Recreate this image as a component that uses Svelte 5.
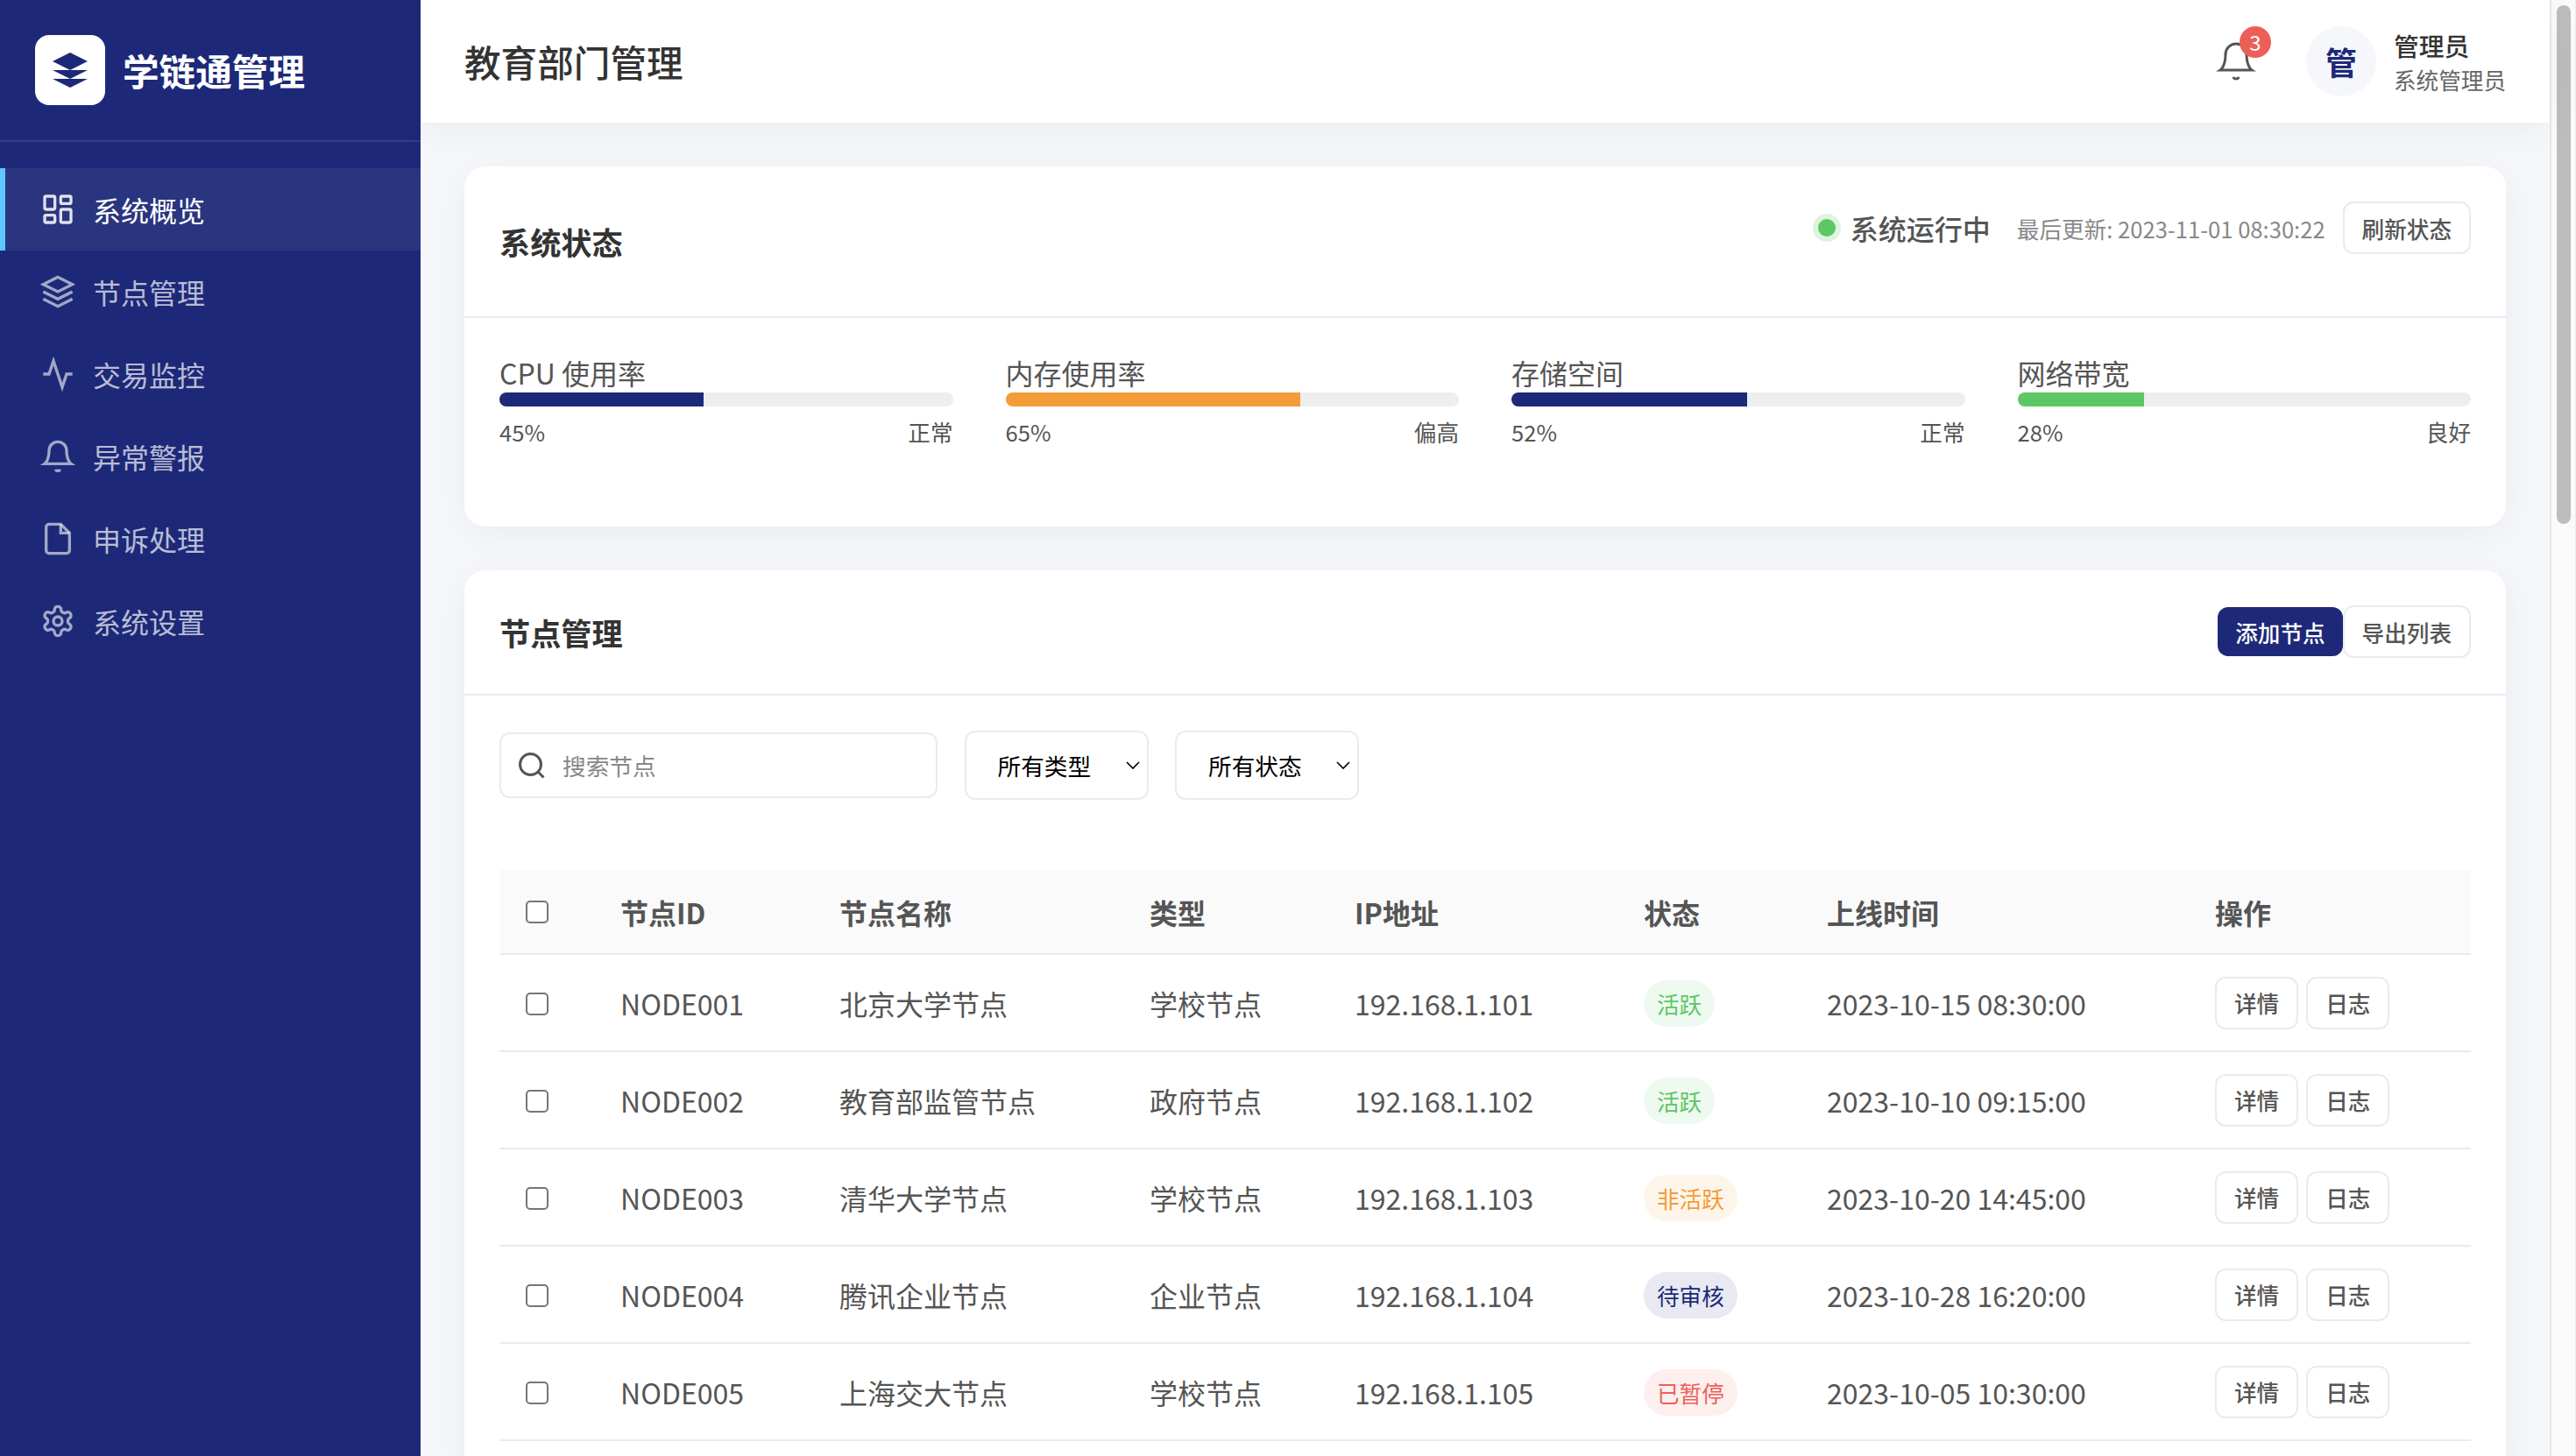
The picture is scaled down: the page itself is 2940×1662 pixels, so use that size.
<script>
	const navItems = [
		{ label: '系统概览', icon: 'grid', active: true },
		{ label: '节点管理', icon: 'layers' },
		{ label: '交易监控', icon: 'activity' },
		{ label: '异常警报', icon: 'bell' },
		{ label: '申诉处理', icon: 'file' },
		{ label: '系统设置', icon: 'gear' }
	];

	const metrics = [
		{ label: 'CPU 使用率', value: 45, state: '正常', tone: 'navy' },
		{ label: '内存使用率', value: 65, state: '偏高', tone: 'orange' },
		{ label: '存储空间', value: 52, state: '正常', tone: 'navy' },
		{ label: '网络带宽', value: 28, state: '良好', tone: 'green' }
	];

	const nodes = [
		{ id: 'NODE001', name: '北京大学节点', type: '学校节点', ip: '192.168.1.101', status: '活跃', tone: 'green', time: '2023-10-15 08:30:00' },
		{ id: 'NODE002', name: '教育部监管节点', type: '政府节点', ip: '192.168.1.102', status: '活跃', tone: 'green', time: '2023-10-10 09:15:00' },
		{ id: 'NODE003', name: '清华大学节点', type: '学校节点', ip: '192.168.1.103', status: '非活跃', tone: 'orange', time: '2023-10-20 14:45:00' },
		{ id: 'NODE004', name: '腾讯企业节点', type: '企业节点', ip: '192.168.1.104', status: '待审核', tone: 'navy', time: '2023-10-28 16:20:00' },
		{ id: 'NODE005', name: '上海交大节点', type: '学校节点', ip: '192.168.1.105', status: '已暂停', tone: 'red', time: '2023-10-05 10:30:00' }
	];
</script>

<div class="layout">
	<aside class="sidebar">
		<div class="brand">
			<div class="logo">
				<svg viewBox="0 0 24 24" width="48" height="48" fill="#1d2978">
					<path d="M12 2 2 7l10 5 10-5z" />
					<path d="M2 12l10 5 10-5z" />
					<path d="M2 17l10 5 10-5z" />
				</svg>
			</div>
			<span class="brand-name">学链通管理</span>
		</div>
		<nav class="nav">
			{#each navItems as item}
				<div class="nav-item" class:active={item.active}>
					<svg class="nav-icon" viewBox="0 0 24 24" fill="none" stroke="currentColor" stroke-width="2">
						{#if item.icon === 'grid'}
							<rect x="3" y="3" width="7" height="9" rx="1" />
							<rect x="14" y="3" width="7" height="5" rx="1" />
							<rect x="14" y="12" width="7" height="9" rx="1" />
							<rect x="3" y="16" width="7" height="5" rx="1" />
						{:else if item.icon === 'layers'}
							<path d="M12 2 2 7l10 5 10-5z" />
							<path d="M2 17l10 5 10-5" />
							<path d="M2 12l10 5 10-5" />
						{:else if item.icon === 'activity'}
							<path d="M22 12h-4l-3 9L9 3l-3 9H2" />
						{:else if item.icon === 'bell'}
							<path d="M18 8A6 6 0 0 0 6 8c0 7-3 9-3 9h18s-3-2-3-9" />
							<path d="M13.73 21a2 2 0 0 1-3.46 0" />
						{:else if item.icon === 'file'}
							<path d="M14 2H6a2 2 0 0 0-2 2v16a2 2 0 0 0 2 2h12a2 2 0 0 0 2-2V8z" />
							<path d="M14 2v6h6" />
						{:else}
							<path d="M12.22 2h-.44a2 2 0 0 0-2 2v.18a2 2 0 0 1-1 1.73l-.43.25a2 2 0 0 1-2 0l-.15-.08a2 2 0 0 0-2.73.73l-.22.38a2 2 0 0 0 .73 2.73l.15.1a2 2 0 0 1 1 1.72v.51a2 2 0 0 1-1 1.74l-.15.09a2 2 0 0 0-.73 2.73l.22.38a2 2 0 0 0 2.73.73l.15-.08a2 2 0 0 1 2 0l.43.25a2 2 0 0 1 1 1.73V20a2 2 0 0 0 2 2h.44a2 2 0 0 0 2-2v-.18a2 2 0 0 1 1-1.73l.43-.25a2 2 0 0 1 2 0l.15.08a2 2 0 0 0 2.73-.73l.22-.39a2 2 0 0 0-.73-2.73l-.15-.08a2 2 0 0 1-1-1.74v-.5a2 2 0 0 1 1-1.74l.15-.09a2 2 0 0 0 .73-2.73l-.22-.38a2 2 0 0 0-2.73-.73l-.15.08a2 2 0 0 1-2 0l-.43-.25a2 2 0 0 1-1-1.73V4a2 2 0 0 0-2-2z" />
							<circle cx="12" cy="12" r="3" />
						{/if}
					</svg>
					<span>{item.label}</span>
				</div>
			{/each}
		</nav>
	</aside>

	<div class="main">
		<header class="topbar">
			<h1>教育部门管理</h1>
			<div class="topbar-right">
				<div class="bell">
					<svg viewBox="0 0 24 24" width="48" height="48" fill="none" stroke="#555" stroke-width="1.5">
						<path d="M18 8A6 6 0 0 0 6 8c0 7-3 9-3 9h18s-3-2-3-9" />
						<path d="M13.73 21a2 2 0 0 1-3.46 0" />
					</svg>
					<span class="bell-count">3</span>
				</div>
				<div class="user">
					<div class="avatar">管</div>
					<div class="user-text">
						<div class="user-name">管理员</div>
						<div class="user-role">系统管理员</div>
					</div>
				</div>
			</div>
		</header>

		<div class="content">
			<section class="card">
				<div class="card-head">
					<h2>系统状态</h2>
					<div class="status-line">
						<span class="dot"></span>
						<span class="status-text">系统运行中</span>
						<span class="updated">最后更新: 2023-11-01 08:30:22</span>
						<button class="btn">刷新状态</button>
					</div>
				</div>
				<div class="metrics">
					{#each metrics as m}
						<div class="metric">
							<div class="metric-label">{m.label}</div>
							<div class="track">
								<div class="fill {m.tone}" style="width: {m.value}%"></div>
							</div>
							<div class="metric-foot">
								<span>{m.value}%</span>
								<span>{m.state}</span>
							</div>
						</div>
					{/each}
				</div>
			</section>

			<section class="card">
				<div class="card-head">
					<h2>节点管理</h2>
					<div class="actions">
						<button class="btn primary">添加节点</button>
						<button class="btn">导出列表</button>
					</div>
				</div>
				<div class="card-body">
					<div class="filters">
						<div class="search">
							<svg viewBox="0 0 24 24" width="36" height="36" fill="none" stroke="#555" stroke-width="2">
								<circle cx="11" cy="11" r="8" />
								<path d="M21 21l-4.35-4.35" />
							</svg>
							<input type="text" placeholder="搜索节点" />
						</div>
						<select><option>所有类型</option></select>
						<select><option>所有状态</option></select>
					</div>

					<table>
						<thead>
							<tr>
								<th><input type="checkbox" /></th>
								<th>节点ID</th>
								<th>节点名称</th>
								<th>类型</th>
								<th>IP地址</th>
								<th>状态</th>
								<th>上线时间</th>
								<th>操作</th>
							</tr>
						</thead>
						<tbody>
							{#each nodes as node}
								<tr>
									<td class="check"><input type="checkbox" /></td>
									<td>{node.id}</td>
									<td>{node.name}</td>
									<td>{node.type}</td>
									<td>{node.ip}</td>
									<td><span class="badge {node.tone}">{node.status}</span></td>
									<td>{node.time}</td>
									<td>
										<div class="row-actions">
											<button class="btn">详情</button>
											<button class="btn">日志</button>
										</div>
									</td>
								</tr>
							{/each}
						</tbody>
					</table>
				</div>
			</section>
		</div>
	</div>

	<!-- page scrollbar as it shows in the window -->
	<div class="rail">
		<div class="rail-thumb"></div>
	</div>
</div>

<style>
	:global(body) {
		background: #f5f7fb;
		font-family: "Noto Sans CJK SC", "Noto Sans", sans-serif;
		color: #333;
	}

	.layout {
		display: flex;
		height: 100vh;
		overflow: hidden;
	}

	.sidebar {
		flex: 0 0 480px;
		background: #1d2978;
		color: #fff;
	}

	.brand {
		display: flex;
		align-items: center;
		gap: 20px;
		height: 160px;
		padding: 0 40px;
		border-bottom: 2px solid rgba(255, 255, 255, 0.1);
	}

	.logo {
		display: flex;
		align-items: center;
		justify-content: center;
		width: 80px;
		height: 80px;
		background: #fff;
		border-radius: 16px;
	}

	.brand-name {
		font-size: 41.6px;
		font-weight: 700;
	}

	.nav {
		padding-top: 30px;
	}

	.nav-item {
		display: flex;
		align-items: center;
		gap: 20px;
		height: 94px;
		padding-left: 46px;
		font-size: 32px;
		color: rgba(255, 255, 255, 0.7);
	}

	.nav-item.active {
		padding-left: 40px;
		border-left: 6px solid #5cc8ff;
		background: rgba(255, 255, 255, 0.06);
		color: #fff;
	}

	.nav-icon {
		flex: none;
		width: 40px;
		height: 40px;
		opacity: 0.85;
	}

	.main {
		flex: 1;
		min-width: 0;
		display: flex;
		flex-direction: column;
	}

	.topbar {
		position: relative;
		z-index: 5;
		flex: none;
		display: flex;
		align-items: center;
		justify-content: space-between;
		height: 140px;
		padding: 0 50px;
		background: #fff;
		box-shadow: 0 8px 40px rgba(0, 0, 0, 0.05);
	}

	h1 {
		margin: 0;
		font-size: 41.6px;
		font-weight: 500;
		color: #333;
	}

	.topbar-right {
		display: flex;
		align-items: center;
		gap: 56px;
	}

	.bell {
		position: relative;
		display: flex;
		width: 48px;
		height: 48px;
	}

	.bell-count {
		position: absolute;
		top: -16px;
		right: -16px;
		width: 36px;
		height: 36px;
		border-radius: 50%;
		background: #ec5f59;
		color: #fff;
		font-size: 24px;
		line-height: 36px;
		text-align: center;
	}

	.user {
		display: flex;
		align-items: center;
		gap: 20px;
	}

	.avatar {
		display: flex;
		align-items: center;
		justify-content: center;
		width: 80px;
		height: 80px;
		border-radius: 50%;
		background: #f5f7fb;
		color: #1d2978;
		font-size: 36px;
		font-weight: 700;
	}

	.user-name {
		font-size: 28.8px;
		font-weight: 500;
		color: #333;
	}

	.user-role {
		font-size: 25.6px;
		color: #666;
	}

	.content {
		flex: 1;
		min-height: 0;
		padding: 50px;
	}

	.card {
		margin-bottom: 50px;
		background: #fff;
		border-radius: 24px;
		box-shadow: 0 8px 40px rgba(0, 0, 0, 0.05);
	}

	.card-head {
		display: flex;
		align-items: center;
		justify-content: space-between;
		padding: 40px 40px 41px;
		border-bottom: 2px solid #e8ebf4;
	}

	h2 {
		margin: 0;
		font-size: 35.2px;
		font-weight: 700;
		color: #333;
	}

	.status-line {
		display: flex;
		align-items: center;
		padding-bottom: 30px;
	}

	.dot {
		width: 20px;
		height: 20px;
		margin-right: 17px;
		border-radius: 50%;
		background: #5cc764;
		box-shadow: 0 0 0 6px rgba(92, 199, 100, 0.2);
	}

	.status-text {
		margin-right: 30px;
		font-size: 32px;
		font-weight: 500;
		color: #555;
	}

	.updated {
		margin-right: 20px;
		font-size: 25.6px;
		color: #888;
	}

	.btn {
		padding: 9.5px 20px;
		border: 2px solid #e8ebf4;
		border-radius: 12px;
		background: #fff;
		color: #555;
		font-family: inherit;
		font-size: 25.6px;
		font-weight: 500;
	}

	.btn.primary {
		border: none;
		background: #1d2978;
		color: #fff;
	}

	.actions {
		display: flex;
		align-items: center;
	}

	.metrics {
		display: grid;
		grid-template-columns: repeat(4, 1fr);
		gap: 60px;
		padding: 39px 40px 90px;
	}

	.metric-label {
		font-size: 32px;
		color: #555;
	}

	.track {
		height: 16px;
		overflow: hidden;
		border-radius: 8px;
		background: #eee;
	}

	.fill {
		height: 100%;
	}

	.fill.navy {
		background: #1d2978;
	}

	.fill.orange {
		background: #f39c38;
	}

	.fill.green {
		background: #5cc764;
	}

	.metric-foot {
		display: flex;
		justify-content: space-between;
		margin-top: 10px;
		font-size: 25.6px;
		color: #555;
	}

	.card-body {
		padding: 40px;
	}

	.filters {
		display: flex;
		align-items: center;
		gap: 30.5px;
		margin-bottom: 80px;
	}

	.search {
		display: flex;
		align-items: center;
		gap: 17px;
		box-sizing: border-box;
		width: 500px;
		height: 75px;
		padding: 0 17px;
		border: 2px solid #e8ebf4;
		border-radius: 12px;
	}

	.search input {
		flex: 1;
		min-width: 0;
		padding: 0;
		border: none;
		outline: none;
		font-family: inherit;
		font-size: 26.67px;
	}

	.search input::placeholder {
		color: #888;
	}

	select {
		box-sizing: border-box;
		width: 210px;
		height: 79px;
		padding: 0 30px 0 36px;
		appearance: none;
		border: 2px solid #e8ebf4;
		border-radius: 12px;
		background: #fff url("data:image/svg+xml,%3Csvg xmlns='http://www.w3.org/2000/svg' width='16' height='10'%3E%3Cpath d='M1 1l7 7 7-7' fill='none' stroke='%23000' stroke-width='1.6'/%3E%3C/svg%3E") no-repeat right 8px center;
		color: #000;
		font-family: inherit;
		font-size: 26.67px;
	}

	table {
		width: 100%;
		table-layout: fixed;
		border-collapse: collapse;
		font-size: 32px;
		color: #555;
	}

	th:nth-child(1) { width: 108px; }
	th:nth-child(2) { width: 250px; }
	th:nth-child(3) { width: 354px; }
	th:nth-child(4) { width: 234px; }
	th:nth-child(5) { width: 330px; }
	th:nth-child(6) { width: 209px; }
	th:nth-child(7) { width: 443px; }

	th,
	td {
		box-sizing: border-box;
		padding: 0 30px;
		border-bottom: 2px solid #e8ebf4;
		text-align: left;
		white-space: nowrap;
	}

	th {
		height: 96px;
		background: #fafafa;
		font-weight: 700;
	}

	td {
		height: 111px;
	}

	td.check {
		padding-top: 2px;
	}

	input[type='checkbox'] {
		display: block;
		width: 26px;
		height: 26px;
		margin: 0;
		appearance: none;
		border: 2px solid #767676;
		border-radius: 5px;
		background: #fff;
	}

	.badge {
		display: inline-block;
		padding: 8px 15px;
		border-radius: 100px;
		font-size: 25.6px;
		vertical-align: middle;
	}

	.badge.green {
		background: #eef9f0;
		color: #5cc764;
	}

	.badge.orange {
		background: #fef5ea;
		color: #f39c38;
	}

	.badge.navy {
		background: #e8e9f2;
		color: #1d2978;
	}

	.badge.red {
		background: #fdefee;
		color: #ec5f59;
	}

	.row-actions {
		display: flex;
		gap: 9px;
	}

	.rail {
		flex: 0 0 30px;
		box-sizing: border-box;
		border-left: 2px solid #e8e8e8;
		border-right: 1px solid #ededed;
		background: #fafafa;
	}

	.rail-thumb {
		width: 16px;
		height: 592px;
		margin: 6px 0 0 6px;
		border-radius: 8px;
		background: #bdbdbd;
	}
</style>
